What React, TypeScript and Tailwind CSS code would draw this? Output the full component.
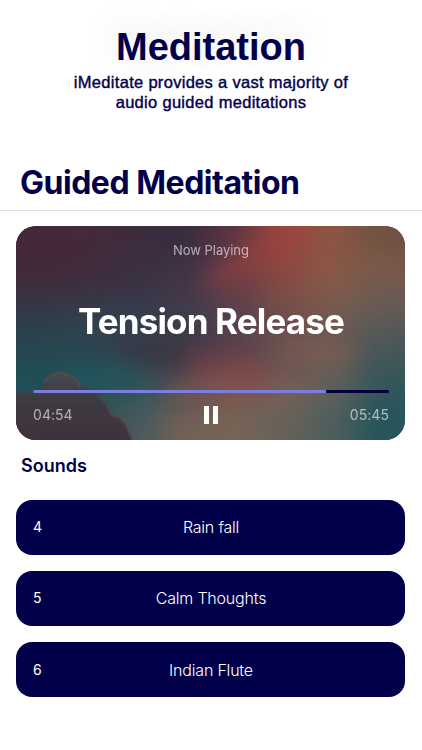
const sounds = [
  { id: 4, name: 'Rain fall' },
  { id: 5, name: 'Calm Thoughts' },
  { id: 6, name: 'Indian Flute' },
];

// Sky colours, row by row, blurred together behind the player
const sky = [
  ['#44283a', '#442a3a', '#3c2c3e', '#382c40', '#5f3642', '#98443e', '#8d5642', '#705242'],
  ['#42293a', '#3e2b3d', '#3a3042', '#453546', '#6f3c43', '#8a4a44', '#865a4a', '#775b4c'],
  ['#2f3c4a', '#33404d', '#343f4e', '#3e3e4e', '#544351', '#6c4f4a', '#745a50', '#5f5a58'],
  ['#26484f', '#2a4650', '#36404c', '#3c3643', '#593f49', '#664f50', '#6b5a54', '#475659'],
  ['#1c515a', '#1f575d', '#2b555b', '#5a4c50', '#80504c', '#7a5f54', '#63605a', '#30565b'],
  ['#2c4a52', '#3a474c', '#4a595b', '#746256', '#766556', '#65625a', '#4c5e5c', '#25555b'],
];

function SkyBackground() {
  return (
    <svg
      className="absolute inset-0 h-full w-full"
      viewBox="0 0 389 214"
      preserveAspectRatio="none"
      aria-hidden="true"
    >
      <defs>
        <filter id="sky" x="-20%" y="-20%" width="140%" height="140%" colorInterpolationFilters="sRGB">
          <feGaussianBlur stdDeviation="17" />
        </filter>
        <filter id="haze" x="-60%" y="-100%" width="220%" height="300%" colorInterpolationFilters="sRGB">
          <feGaussianBlur stdDeviation="9" />
        </filter>
        <filter id="edge">
          <feGaussianBlur stdDeviation="1" />
        </filter>
        <linearGradient id="cloud" x1="0" y1="0" x2="0" y2="1">
          <stop offset="0" stopColor="#414b51" />
          <stop offset="0.35" stopColor="#3e3b43" />
          <stop offset="1" stopColor="#40303b" />
        </linearGradient>
      </defs>
      <rect width="389" height="214" fill="#4b454d" />
      <g filter="url(#sky)">
        {sky.map((row, y) =>
          row.map((color, x) => {
            const left = x === 0 ? -60 : x * 48.6;
            const right = x === 7 ? 449 : (x + 1) * 48.6 + 1;
            const top = y === 0 ? -60 : y * 35.7;
            const bottom = y === 5 ? 274 : (y + 1) * 35.7 + 1;
            return (
              <rect
                key={`${x}-${y}`}
                x={left}
                y={top}
                width={right - left}
                height={bottom - top}
                fill={color}
              />
            );
          })
        )}
      </g>
      <g filter="url(#haze)">
        <ellipse cx="135" cy="126" rx="36" ry="12" fill="#3a2f3e" opacity="0.5" transform="rotate(14 135 126)" />
        <ellipse cx="302" cy="126" rx="42" ry="9" fill="#8f6350" opacity="0.4" transform="rotate(8 302 126)" />
        <ellipse cx="210" cy="141" rx="46" ry="14" fill="#854247" opacity="0.4" transform="rotate(10 210 141)" />
        <ellipse cx="362" cy="36" rx="30" ry="6" fill="#946552" opacity="0.3" />
        <ellipse cx="206" cy="50" rx="22" ry="12" fill="#8a4348" opacity="0.35" transform="rotate(-20 206 50)" />
        <ellipse cx="252" cy="20" rx="52" ry="16" fill="#a5443f" opacity="0.35" transform="rotate(-34 252 20)" />
        <ellipse cx="195" cy="158" rx="44" ry="9" fill="#95604f" opacity="0.4" transform="rotate(-8 195 158)" />
        <ellipse cx="80" cy="150" rx="44" ry="9" fill="#1d5c62" opacity="0.4" />
      </g>
      <path
        d="M-5 166C2 164 8 168 12 166C18 168 22 164 26 162C28 151 36 146 45 146C55 147 62 153 65 161C74 160 82 166 86 174C92 178 93 184 96 189C105 190 112 198 115 214V220H-5Z"
        fill="url(#cloud)"
        filter="url(#edge)"
      />
      <path
        d="M28 157C32 149 38 147 45 147C54 148 61 153 65 162M84 171C91 176 93 183 96 189C105 190 112 198 114 208"
        fill="none"
        stroke="#80594f"
        strokeWidth="1.5"
        opacity="0.5"
        filter="url(#edge)"
      />
    </svg>
  );
}

function Player() {
  return (
    <section className="relative ml-4 mr-[17px] mt-[15px] h-[214px] overflow-hidden rounded-[20px]">
      <SkyBackground />
      <div className="relative flex h-full flex-col pl-[17px] pr-4 text-center text-white">
        <p className="mt-[14px] text-[13px] leading-5 tracking-[-0.05px] text-white/60">Now Playing</p>
        <h3 className="mt-[39px] text-[35px] font-bold leading-[44px] tracking-[-0.85px] whitespace-nowrap">
          Tension Release
        </h3>
        <div className="mt-[47px] h-[3px] overflow-hidden rounded-full bg-[#02003d]">
          <div className="h-full w-[82.3%] bg-[#7b7de0]" />
        </div>
        <div className="mt-[12px] flex h-5 items-center justify-between text-sm tracking-[0.05px] text-white/60">
          <span>04:54</span>
          <button className="flex gap-[4px]" aria-label="Pause">
            <span className="h-[18px] w-[5px] bg-white" />
            <span className="h-[18px] w-[5px] bg-white" />
          </button>
          <span>05:45</span>
        </div>
      </div>
    </section>
  );
}

export default function App() {
  return (
    <main className="h-[750px] w-full overflow-hidden bg-white font-['Inter',sans-serif] text-[#02004a]">
      <header className="pt-[25px] text-center font-['Liberation_Sans',sans-serif]">
        <h1 className="text-[38px] font-bold leading-[44px] [text-shadow:0_-6px_36px_rgba(0,0,0,0.13)]">
          Meditation
        </h1>
        <p className="mt-[3px] text-[16.5px] leading-5 tracking-[0.3px] [-webkit-text-stroke:0.4px_#02004a]">
          iMeditate provides a vast majority of
          <br />
          audio guided meditations
        </p>
      </header>

      <h2 className="mt-[51px] border-b border-[#dcdcde] pb-[7px] pl-5 text-[32px] font-bold leading-10 tracking-[-0.48px]">
        Guided Meditation
      </h2>

      <Player />

      <h3 className="mt-[14px] pl-[21px] text-lg font-semibold leading-6">Sounds</h3>

      <ul className="ml-4 mr-[17px] mt-[21.5px] flex flex-col gap-[16.3px]">
        {sounds.map((sound) => (
          <li
            key={sound.id}
            className="grid h-[55px] grid-cols-[40px_1fr_40px] items-center rounded-[16px] bg-[#02004a] pl-[17px] pr-4 text-white"
          >
            <span className="text-sm">{sound.id}</span>
            <span className="text-center text-base font-light tracking-[-0.2px]">{sound.name}</span>
          </li>
        ))}
      </ul>
    </main>
  );
}
